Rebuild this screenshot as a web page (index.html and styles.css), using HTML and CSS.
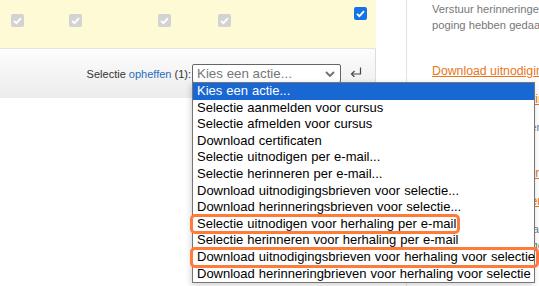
FILE: index.html
```html
<!DOCTYPE html>
<html lang="nl">

<head>
  <meta charset="UTF-8">
  <meta name="viewport" content="width=device-width, initial-scale=1.0">
  <title>Cursisten - acties</title>
  <link rel="stylesheet" href="styles.css">
</head>

<body>
  <div class="page">
    <div class="main">
      <!-- rij met vinkjes -->
      <div class="row-check">
        <span class="cell w1"><span class="cb"><svg viewBox="0 0 13 13"><path d="M3 6.8l2.4 2.4L10 4.2" /></svg></span></span>
        <span class="cell w2"><span class="cb"><svg viewBox="0 0 13 13"><path d="M3 6.8l2.4 2.4L10 4.2" /></svg></span></span>
        <span class="cell w3"><span class="cb"><svg viewBox="0 0 13 13"><path d="M3 6.8l2.4 2.4L10 4.2" /></svg></span></span>
        <span class="cell w4"><span class="cb"><svg viewBox="0 0 13 13"><path d="M3 6.8l2.4 2.4L10 4.2" /></svg></span></span>
        <span class="cell"><span class="cb cb-on"><svg viewBox="0 0 13 13"><path d="M3 6.8l2.4 2.4L10 4.2" /></svg></span></span>
      </div>

      <!-- acties onder de tabel -->
      <div class="actions">
        <span class="label">Selectie <a href="#">opheffen</a> (1):</span>
        <div class="picker">
          <div class="select">
            <span>Kies een actie...</span>
            <svg class="chev" viewBox="0 0 10 6"><path d="M1 1l4 4 4-4" /></svg>
          </div>
          <ul class="menu">
            <li class="active">Kies een actie...</li>
            <li>Selectie aanmelden voor cursus</li>
            <li>Selectie afmelden voor cursus</li>
            <li>Download certificaten</li>
            <li>Selectie uitnodigen per e-mail...</li>
            <li>Selectie herinneren per e-mail...</li>
            <li>Download uitnodigingsbrieven voor selectie...</li>
            <li>Download herinneringsbrieven voor selectie...</li>
            <li><span class="mark">Selectie uitnodigen voor herhaling per e-mail</span></li>
            <li>Selectie herinneren voor herhaling per e-mail</li>
            <li><span class="mark">Download uitnodigingsbrieven voor herhaling voor selectie</span></li>
            <li>Download herinneringbrieven voor herhaling voor selectie</li>
          </ul>
        </div>
        <svg class="go" viewBox="0 0 12 10"><path d="M10.5 0.5v6.5H2" /><path d="M4.5 4L1.5 7l3 3" /></svg>
      </div>
    </div>

    <div class="side">
      <a class="top-link" href="#">Herinneringen versturen</a>
      <p class="note">Verstuur herinneringen aan cursisten die nog geen poging hebben gedaan.</p>
      <a class="link" href="#">Download uitnodigingsbrieven</a>
      <a class="link" href="#">Download herinneringsbrieven</a>
      <p class="note">Brieven voor cursisten zonder e-mailadres.</p>
      <a class="link" href="#">Uitnodigen voor herhaling</a>
      <a class="link" href="#">Herinneren voor herhaling</a>
      <p class="note">Stuur een bericht naar cursisten die de cursus opnieuw moeten volgen.</p>
      <a class="link" href="#">Download certificaten</a>
      <p class="note">Overzicht downloaden</p>
    </div>
  </div>
</body>

</html>
```

FILE: styles.css
```css
* {
  padding: 0;
  margin: 0;
  box-sizing: border-box;
}

html,
body {
  overflow: hidden;
}

body {
  font-family: "Liberation Sans", Arial, sans-serif;
  color: #333;
  background: #fff;
}

.page {
  display: flex;
  width: 700px;
  height: 286px;
}

.main {
  width: 376px;
  flex: none;
}

/* rij met vinkjes */
.row-check {
  display: flex;
  align-items: flex-start;
  height: 49px;
  padding: 14px 0 0 11px;
  background-color: #fffad6;
  border-bottom: 1px solid #e4e4e4;
}

.cell {
  display: block;
}

.w1 {
  width: 58px;
}

.w2 {
  width: 89px;
}

.w3 {
  width: 60px;
}

.w4 {
  width: 136px;
}

.cb {
  display: block;
  width: 13px;
  height: 13px;
  border-radius: 2px;
  background-color: #d3d3d3;
}

.cb svg {
  display: block;
  width: 13px;
  height: 13px;
  fill: none;
  stroke: #fff;
  stroke-width: 1.9;
}

.cb-on {
  margin-top: -7px;
  background-color: #1473e6;
}

/* acties */
.actions {
  display: flex;
  align-items: center;
  justify-content: flex-end;
  height: 49px;
  padding: 1px 13px 0 0;
  background: linear-gradient(#fdfdfd, #ececec);
  border-right: 1px solid #dcdcdc;
  border-bottom: 1px solid #ececec;
}

.label {
  font-size: 11px;
  color: #333;
  margin-right: 1px;
}

.label a {
  color: #1f6fbf;
  text-decoration: none;
}

.picker {
  position: relative;
}

.select {
  display: flex;
  align-items: center;
  justify-content: space-between;
  width: 149px;
  height: 19px;
  padding: 0 4px 0 4px;
  border: 1px solid #666;
  border-radius: 2px;
  background: #fff;
  font-size: 13.33px;
  color: #767676;
}

.chev {
  width: 10px;
  height: 6px;
  margin-right: 1px;
  fill: none;
  stroke: #6f6f6f;
  stroke-width: 1.8;
}

.go {
  width: 12px;
  height: 10px;
  margin-left: 9px;
  margin-bottom: 4px;
  fill: none;
  stroke: #444;
  stroke-width: 1.2;
}

/* open keuzelijst */
.menu {
  position: absolute;
  top: 18px;
  left: 0;
  z-index: 5;
  width: 343px;
  list-style: none;
  background: #fff;
  border: 1px solid #767676;
  box-shadow: -1px 2px 6px rgba(0, 0, 0, 0.18);
  font-size: 13px;
  word-spacing: 0.4px;
  color: #000;
}

.menu li {
  height: 16.6px;
  line-height: 16.6px;
  padding: 0 4px;
  white-space: nowrap;
}

.menu li.active {
  background-color: #1967d2;
  color: #fff;
}

.mark {
  display: inline-block;
  margin-left: -5px;
  padding: 0 2px 0 5px;
  border-radius: 3px;
  outline: 3px solid #ff7b3b;
  outline-offset: -1px;
}

/* rechter kolom */
.side {
  width: 290px;
  margin-left: 30px;
  padding-left: 25px;
  border-left: 1px solid #e2e2e2;
  font-size: 11.2px;
  line-height: 16px;
}

.top-link {
  display: block;
  margin-top: -15px;
  font-size: 12px;
  color: #e8761c;
}

.note {
  width: 266px;
  color: #777;
  margin-bottom: 30px;
}

.link {
  display: block;
  font-size: 12.3px;
  line-height: 16px;
  color: #e8761c;
  margin-bottom: 12px;
}
```
